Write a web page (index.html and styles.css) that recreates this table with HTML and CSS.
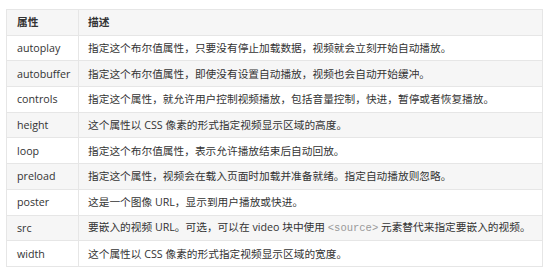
FILE: index.html
```html
<!DOCTYPE html>
<html lang="zh-CN">
<head>
<meta charset="utf-8">
<link rel="stylesheet" href="styles.css">
</head>
<body>
<table class="attr-table">
  <thead>
    <tr><th class="c1">属性</th><th>描述</th></tr>
  </thead>
  <tbody>
    <tr><td class="c1">autoplay</td><td>指定这个布尔值属性，只要没有停止加载数据，视频就会立刻开始自动播放。</td></tr>
    <tr><td class="c1">autobuffer</td><td>指定这个布尔值属性，即使没有设置自动播放，视频也会自动开始缓冲。</td></tr>
    <tr><td class="c1">controls</td><td>指定这个属性，就允许用户控制视频播放，包括音量控制，快进，暂停或者恢复播放。</td></tr>
    <tr><td class="c1">height</td><td>这个属性以 CSS 像素的形式指定视频显示区域的高度。</td></tr>
    <tr><td class="c1">loop</td><td>指定这个布尔值属性，表示允许播放结束后自动回放。</td></tr>
    <tr><td class="c1">preload</td><td>指定这个属性，视频会在载入页面时加载并准备就绪。指定自动播放则忽略。</td></tr>
    <tr><td class="c1">poster</td><td>这是一个图像 URL，显示到用户播放或快进。</td></tr>
    <tr><td class="c1">src</td><td>要嵌入的视频 URL。可选，可以在 video 块中使用 <code>&lt;source&gt;</code> 元素替代来指定要嵌入的视频。</td></tr>
    <tr><td class="c1">width</td><td>这个属性以 CSS 像素的形式指定视频显示区域的宽度。</td></tr>
  </tbody>
</table>
</body>
</html>
```
FILE: styles.css
```css
html, body {
  margin: 0;
  padding: 0;
  background: #ffffff;
}
body {
  padding: 9px 7px 0 6px;
  font-family: "Open Sans", "Noto Sans CJK SC", sans-serif;
  font-size: 10.7px;
  color: #333333;
}
.attr-table {
  width: 537px;
  border-collapse: collapse;
  table-layout: fixed;
}
.attr-table th,
.attr-table td {
  border: 1px solid #e6e6e6;
  height: 24.7px;
  padding: 0 0 0 9px;
  text-align: left;
  vertical-align: middle;
  white-space: nowrap;
  line-height: 14px;
}
.attr-table .c1 {
  width: 61px;
  padding-left: 10px;
}
.attr-table th {
  font-weight: 700;
  background: #f6f6f6;
}
.attr-table tbody tr:nth-child(even) td {
  background: #f6f6f6;
}
.attr-table code {
  font-family: "Liberation Mono", monospace;
  font-size: 10.5px;
  color: #999999;
}
```
